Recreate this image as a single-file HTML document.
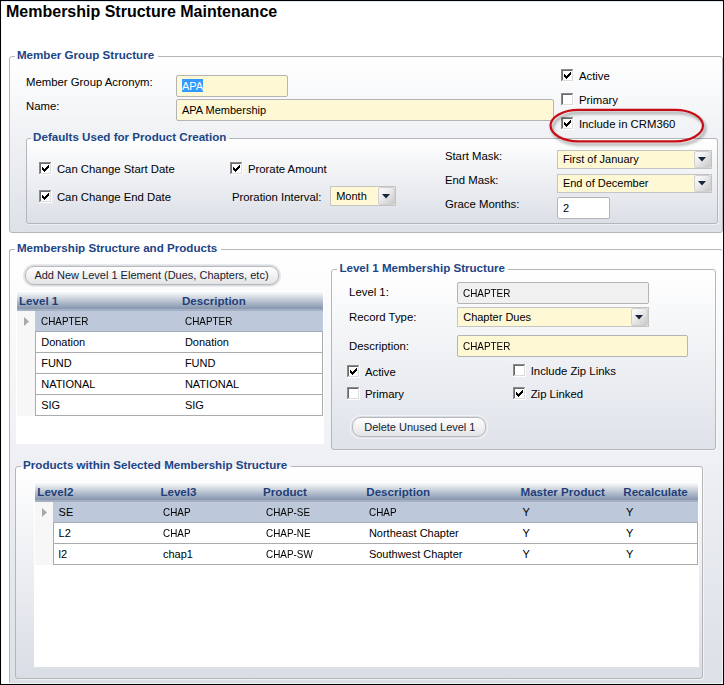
<!DOCTYPE html>
<html><head><meta charset="utf-8"><style>
html,body{margin:0;padding:0;}
body{width:724px;height:685px;position:relative;overflow:hidden;background:#fff;font-family:"Liberation Sans",sans-serif;}
.b{position:absolute;box-sizing:border-box;}
.t{position:absolute;white-space:nowrap;}
.cb{width:13px;height:13px;background:#fff;border-top:1px solid #7a7a7a;border-left:1px solid #7a7a7a;border-right:1px solid #dcdcdc;border-bottom:1px solid #dcdcdc;box-shadow:inset 1px 1px 0 #a8a8a8;}
</style></head><body>
<div class="t" style="left:6.00px;top:4.26px;font-size:16px;line-height:16px;font-weight:bold;color:#000;">Membership Structure Maintenance</div>
<div class="b" style="left:9px;top:56px;width:714px;height:177px;border:1px solid #b5b6b9;border-radius:3px;background:linear-gradient(#ffffff,#dde1e8);box-shadow:1px 1px 0 rgba(255,255,255,0.5);"></div>
<div class="b" style="left:14.5px;top:56px;width:143.0px;height:1px;background:#ffffff;"></div>
<div class="t" style="left:16.90px;top:49.18px;font-size:11.6px;line-height:11.6px;font-weight:bold;color:#1c4586;">Member Group Structure</div>
<div class="t" style="left:26.00px;top:77.29px;font-size:11.35px;line-height:11.35px;color:#000;">Member Group Acronym:</div>
<div class="t" style="left:26.00px;top:100.99px;font-size:11.35px;line-height:11.35px;color:#000;">Name:</div>
<div class="b" style="left:176px;top:75px;width:112px;height:22px;border:1px solid #b4b4b4;border-radius:2px;background:#fff8d4;"></div>
<div class="b" style="left:182px;top:79px;width:21px;height:13px;background:#3399ff;"></div>
<div class="t" style="left:181.90px;top:81.19px;font-size:11px;line-height:11px;color:#fff;">APA</div>
<div class="b" style="left:176px;top:99px;width:378px;height:22px;border:1px solid #b4b4b4;border-radius:2px;background:#fff8d4;"></div>
<div class="t" style="left:181.90px;top:105.49px;font-size:11px;line-height:11px;color:#000;">APA Membership</div>
<svg class="b" style="left:561px;top:69px" width="13" height="13" shape-rendering="crispEdges"><rect x="0" y="0" width="12" height="1" fill="#8a8a8a"/><rect x="0" y="0" width="1" height="12" fill="#8a8a8a"/><rect x="1" y="1" width="10" height="1" fill="#6a6a6a"/><rect x="1" y="1" width="1" height="10" fill="#6a6a6a"/><rect x="2" y="2" width="9" height="9" fill="#fff"/><rect x="11" y="1" width="1" height="11" fill="#dcdcdc"/><rect x="1" y="11" width="11" height="1" fill="#dcdcdc"/><rect x="12" y="0" width="1" height="13" fill="#fff"/><rect x="0" y="12" width="13" height="1" fill="#fff"/><rect x="9" y="3" width="1" height="1" fill="#000"/><rect x="8" y="4" width="1" height="1" fill="#000"/><rect x="9" y="4" width="1" height="1" fill="#000"/><rect x="3" y="5" width="1" height="1" fill="#000"/><rect x="7" y="5" width="1" height="1" fill="#000"/><rect x="8" y="5" width="1" height="1" fill="#000"/><rect x="9" y="5" width="1" height="1" fill="#000"/><rect x="3" y="6" width="1" height="1" fill="#000"/><rect x="4" y="6" width="1" height="1" fill="#000"/><rect x="6" y="6" width="1" height="1" fill="#000"/><rect x="7" y="6" width="1" height="1" fill="#000"/><rect x="8" y="6" width="1" height="1" fill="#000"/><rect x="3" y="7" width="1" height="1" fill="#000"/><rect x="4" y="7" width="1" height="1" fill="#000"/><rect x="5" y="7" width="1" height="1" fill="#000"/><rect x="6" y="7" width="1" height="1" fill="#000"/><rect x="7" y="7" width="1" height="1" fill="#000"/><rect x="4" y="8" width="1" height="1" fill="#000"/><rect x="5" y="8" width="1" height="1" fill="#000"/><rect x="6" y="8" width="1" height="1" fill="#000"/><rect x="5" y="9" width="1" height="1" fill="#000"/></svg>
<div class="t" style="left:578.90px;top:71.39px;font-size:11.35px;line-height:11.35px;color:#000;">Active</div>
<svg class="b" style="left:561px;top:93px" width="13" height="13" shape-rendering="crispEdges"><rect x="0" y="0" width="12" height="1" fill="#8a8a8a"/><rect x="0" y="0" width="1" height="12" fill="#8a8a8a"/><rect x="1" y="1" width="10" height="1" fill="#6a6a6a"/><rect x="1" y="1" width="1" height="10" fill="#6a6a6a"/><rect x="2" y="2" width="9" height="9" fill="#fff"/><rect x="11" y="1" width="1" height="11" fill="#dcdcdc"/><rect x="1" y="11" width="11" height="1" fill="#dcdcdc"/><rect x="12" y="0" width="1" height="13" fill="#fff"/><rect x="0" y="12" width="13" height="1" fill="#fff"/></svg>
<div class="t" style="left:578.90px;top:95.39px;font-size:11.35px;line-height:11.35px;color:#000;">Primary</div>
<svg class="b" style="left:561px;top:117px" width="13" height="13" shape-rendering="crispEdges"><rect x="0" y="0" width="12" height="1" fill="#8a8a8a"/><rect x="0" y="0" width="1" height="12" fill="#8a8a8a"/><rect x="1" y="1" width="10" height="1" fill="#6a6a6a"/><rect x="1" y="1" width="1" height="10" fill="#6a6a6a"/><rect x="2" y="2" width="9" height="9" fill="#fff"/><rect x="11" y="1" width="1" height="11" fill="#dcdcdc"/><rect x="1" y="11" width="11" height="1" fill="#dcdcdc"/><rect x="12" y="0" width="1" height="13" fill="#fff"/><rect x="0" y="12" width="13" height="1" fill="#fff"/><rect x="9" y="3" width="1" height="1" fill="#000"/><rect x="8" y="4" width="1" height="1" fill="#000"/><rect x="9" y="4" width="1" height="1" fill="#000"/><rect x="3" y="5" width="1" height="1" fill="#000"/><rect x="7" y="5" width="1" height="1" fill="#000"/><rect x="8" y="5" width="1" height="1" fill="#000"/><rect x="9" y="5" width="1" height="1" fill="#000"/><rect x="3" y="6" width="1" height="1" fill="#000"/><rect x="4" y="6" width="1" height="1" fill="#000"/><rect x="6" y="6" width="1" height="1" fill="#000"/><rect x="7" y="6" width="1" height="1" fill="#000"/><rect x="8" y="6" width="1" height="1" fill="#000"/><rect x="3" y="7" width="1" height="1" fill="#000"/><rect x="4" y="7" width="1" height="1" fill="#000"/><rect x="5" y="7" width="1" height="1" fill="#000"/><rect x="6" y="7" width="1" height="1" fill="#000"/><rect x="7" y="7" width="1" height="1" fill="#000"/><rect x="4" y="8" width="1" height="1" fill="#000"/><rect x="5" y="8" width="1" height="1" fill="#000"/><rect x="6" y="8" width="1" height="1" fill="#000"/><rect x="5" y="9" width="1" height="1" fill="#000"/></svg>
<div class="t" style="left:578.90px;top:118.89px;font-size:11.35px;line-height:11.35px;color:#000;">Include in CRM360</div>
<div class="b" style="left:26px;top:138px;width:692px;height:86px;border:1px solid #b5b6b9;border-radius:3px;background:linear-gradient(#ffffff,#dbdfe6);box-shadow:1px 1px 0 rgba(255,255,255,0.5);"></div>
<div class="b" style="left:30.700000000000003px;top:138px;width:198.0px;height:1px;background:#eff1f4;"></div>
<div class="t" style="left:33.10px;top:130.88px;font-size:11.6px;line-height:11.6px;font-weight:bold;color:#1c4586;">Defaults Used for Product Creation</div>
<svg class="b" style="left:39px;top:162px" width="13" height="13" shape-rendering="crispEdges"><rect x="0" y="0" width="12" height="1" fill="#8a8a8a"/><rect x="0" y="0" width="1" height="12" fill="#8a8a8a"/><rect x="1" y="1" width="10" height="1" fill="#6a6a6a"/><rect x="1" y="1" width="1" height="10" fill="#6a6a6a"/><rect x="2" y="2" width="9" height="9" fill="#fff"/><rect x="11" y="1" width="1" height="11" fill="#dcdcdc"/><rect x="1" y="11" width="11" height="1" fill="#dcdcdc"/><rect x="12" y="0" width="1" height="13" fill="#fff"/><rect x="0" y="12" width="13" height="1" fill="#fff"/><rect x="9" y="3" width="1" height="1" fill="#000"/><rect x="8" y="4" width="1" height="1" fill="#000"/><rect x="9" y="4" width="1" height="1" fill="#000"/><rect x="3" y="5" width="1" height="1" fill="#000"/><rect x="7" y="5" width="1" height="1" fill="#000"/><rect x="8" y="5" width="1" height="1" fill="#000"/><rect x="9" y="5" width="1" height="1" fill="#000"/><rect x="3" y="6" width="1" height="1" fill="#000"/><rect x="4" y="6" width="1" height="1" fill="#000"/><rect x="6" y="6" width="1" height="1" fill="#000"/><rect x="7" y="6" width="1" height="1" fill="#000"/><rect x="8" y="6" width="1" height="1" fill="#000"/><rect x="3" y="7" width="1" height="1" fill="#000"/><rect x="4" y="7" width="1" height="1" fill="#000"/><rect x="5" y="7" width="1" height="1" fill="#000"/><rect x="6" y="7" width="1" height="1" fill="#000"/><rect x="7" y="7" width="1" height="1" fill="#000"/><rect x="4" y="8" width="1" height="1" fill="#000"/><rect x="5" y="8" width="1" height="1" fill="#000"/><rect x="6" y="8" width="1" height="1" fill="#000"/><rect x="5" y="9" width="1" height="1" fill="#000"/></svg>
<div class="t" style="left:56.90px;top:163.89px;font-size:11.35px;line-height:11.35px;color:#000;">Can Change Start Date</div>
<svg class="b" style="left:39px;top:190px" width="13" height="13" shape-rendering="crispEdges"><rect x="0" y="0" width="12" height="1" fill="#8a8a8a"/><rect x="0" y="0" width="1" height="12" fill="#8a8a8a"/><rect x="1" y="1" width="10" height="1" fill="#6a6a6a"/><rect x="1" y="1" width="1" height="10" fill="#6a6a6a"/><rect x="2" y="2" width="9" height="9" fill="#fff"/><rect x="11" y="1" width="1" height="11" fill="#dcdcdc"/><rect x="1" y="11" width="11" height="1" fill="#dcdcdc"/><rect x="12" y="0" width="1" height="13" fill="#fff"/><rect x="0" y="12" width="13" height="1" fill="#fff"/><rect x="9" y="3" width="1" height="1" fill="#000"/><rect x="8" y="4" width="1" height="1" fill="#000"/><rect x="9" y="4" width="1" height="1" fill="#000"/><rect x="3" y="5" width="1" height="1" fill="#000"/><rect x="7" y="5" width="1" height="1" fill="#000"/><rect x="8" y="5" width="1" height="1" fill="#000"/><rect x="9" y="5" width="1" height="1" fill="#000"/><rect x="3" y="6" width="1" height="1" fill="#000"/><rect x="4" y="6" width="1" height="1" fill="#000"/><rect x="6" y="6" width="1" height="1" fill="#000"/><rect x="7" y="6" width="1" height="1" fill="#000"/><rect x="8" y="6" width="1" height="1" fill="#000"/><rect x="3" y="7" width="1" height="1" fill="#000"/><rect x="4" y="7" width="1" height="1" fill="#000"/><rect x="5" y="7" width="1" height="1" fill="#000"/><rect x="6" y="7" width="1" height="1" fill="#000"/><rect x="7" y="7" width="1" height="1" fill="#000"/><rect x="4" y="8" width="1" height="1" fill="#000"/><rect x="5" y="8" width="1" height="1" fill="#000"/><rect x="6" y="8" width="1" height="1" fill="#000"/><rect x="5" y="9" width="1" height="1" fill="#000"/></svg>
<div class="t" style="left:56.90px;top:192.39px;font-size:11.35px;line-height:11.35px;color:#000;">Can Change End Date</div>
<svg class="b" style="left:230px;top:162px" width="13" height="13" shape-rendering="crispEdges"><rect x="0" y="0" width="12" height="1" fill="#8a8a8a"/><rect x="0" y="0" width="1" height="12" fill="#8a8a8a"/><rect x="1" y="1" width="10" height="1" fill="#6a6a6a"/><rect x="1" y="1" width="1" height="10" fill="#6a6a6a"/><rect x="2" y="2" width="9" height="9" fill="#fff"/><rect x="11" y="1" width="1" height="11" fill="#dcdcdc"/><rect x="1" y="11" width="11" height="1" fill="#dcdcdc"/><rect x="12" y="0" width="1" height="13" fill="#fff"/><rect x="0" y="12" width="13" height="1" fill="#fff"/><rect x="9" y="3" width="1" height="1" fill="#000"/><rect x="8" y="4" width="1" height="1" fill="#000"/><rect x="9" y="4" width="1" height="1" fill="#000"/><rect x="3" y="5" width="1" height="1" fill="#000"/><rect x="7" y="5" width="1" height="1" fill="#000"/><rect x="8" y="5" width="1" height="1" fill="#000"/><rect x="9" y="5" width="1" height="1" fill="#000"/><rect x="3" y="6" width="1" height="1" fill="#000"/><rect x="4" y="6" width="1" height="1" fill="#000"/><rect x="6" y="6" width="1" height="1" fill="#000"/><rect x="7" y="6" width="1" height="1" fill="#000"/><rect x="8" y="6" width="1" height="1" fill="#000"/><rect x="3" y="7" width="1" height="1" fill="#000"/><rect x="4" y="7" width="1" height="1" fill="#000"/><rect x="5" y="7" width="1" height="1" fill="#000"/><rect x="6" y="7" width="1" height="1" fill="#000"/><rect x="7" y="7" width="1" height="1" fill="#000"/><rect x="4" y="8" width="1" height="1" fill="#000"/><rect x="5" y="8" width="1" height="1" fill="#000"/><rect x="6" y="8" width="1" height="1" fill="#000"/><rect x="5" y="9" width="1" height="1" fill="#000"/></svg>
<div class="t" style="left:247.90px;top:163.59px;font-size:11.35px;line-height:11.35px;color:#000;">Prorate Amount</div>
<div class="t" style="left:231.90px;top:191.59px;font-size:11.35px;line-height:11.35px;color:#000;">Proration Interval:</div>
<div class="b" style="left:330px;top:186px;width:66px;height:20px;border:1px solid #c4c4c4;background:#fff8d4;"></div>
<div class="b" style="left:378px;top:187px;width:17px;height:18px;border-radius:3px;background:linear-gradient(135deg,#ffffff 0%,#ededed 40%,#d6d6d6 75%,#c2c2c2 100%);box-shadow:inset 0 0 0 1px #cfcfcf;"></div>
<svg class="b" style="left:382.3px;top:193.7px" width="8" height="5"><path d="M0 0 H8 L4 4.6 Z" fill="#18243c"/></svg>
<div class="t" style="left:336.20px;top:190.89px;font-size:11px;line-height:11px;color:#000;">Month</div>
<div class="t" style="left:444.90px;top:150.79px;font-size:11.35px;line-height:11.35px;color:#000;">Start Mask:</div>
<div class="t" style="left:444.90px;top:174.59px;font-size:11.35px;line-height:11.35px;color:#000;">End Mask:</div>
<div class="t" style="left:444.90px;top:198.69px;font-size:11.35px;line-height:11.35px;color:#000;">Grace Months:</div>
<div class="b" style="left:557px;top:150px;width:155px;height:19px;border:1px solid #c4c4c4;background:#fff8d4;"></div>
<div class="b" style="left:694px;top:151px;width:17px;height:17px;border-radius:3px;background:linear-gradient(135deg,#ffffff 0%,#ededed 40%,#d6d6d6 75%,#c2c2c2 100%);box-shadow:inset 0 0 0 1px #cfcfcf;"></div>
<svg class="b" style="left:698.3px;top:157.2px" width="8" height="5"><path d="M0 0 H8 L4 4.6 Z" fill="#18243c"/></svg>
<div class="t" style="left:562.90px;top:154.39px;font-size:11px;line-height:11px;color:#000;">First of January</div>
<div class="b" style="left:557px;top:174px;width:155px;height:19px;border:1px solid #c4c4c4;background:#fff8d4;"></div>
<div class="b" style="left:694px;top:175px;width:17px;height:17px;border-radius:3px;background:linear-gradient(135deg,#ffffff 0%,#ededed 40%,#d6d6d6 75%,#c2c2c2 100%);box-shadow:inset 0 0 0 1px #cfcfcf;"></div>
<svg class="b" style="left:698.3px;top:181.2px" width="8" height="5"><path d="M0 0 H8 L4 4.6 Z" fill="#18243c"/></svg>
<div class="t" style="left:562.90px;top:178.09px;font-size:11px;line-height:11px;color:#000;">End of December</div>
<div class="b" style="left:557px;top:197px;width:53px;height:22px;border:1px solid #b4b4b4;border-radius:2px;background:#ffffff;"></div>
<div class="t" style="left:562.90px;top:203.49px;font-size:11px;line-height:11px;color:#000;">2</div>
<svg class="b" style="left:540px;top:100px" width="184" height="60"><defs><filter id="sh" x="-20%" y="-40%" width="140%" height="180%"><feDropShadow dx="2" dy="3" stdDeviation="1.6" flood-color="#000" flood-opacity="0.38"/></filter></defs><rect x="10.5" y="9.8" width="152.5" height="31.6" rx="28" ry="15.8" fill="none" stroke="#c60f18" stroke-width="2.2" filter="url(#sh)"/></svg>
<div class="b" style="left:9px;top:249px;width:714px;height:435px;border:1px solid #b5b6b9;border-radius:3px;background:linear-gradient(#ffffff,#dce0e7);border-right-color:#eef1f6;border-bottom-color:#eef1f6;"></div>
<div class="b" style="left:14.5px;top:249px;width:206.0px;height:1px;background:#ffffff;"></div>
<div class="t" style="left:16.90px;top:241.88px;font-size:11.6px;line-height:11.6px;font-weight:bold;color:#1c4586;">Membership Structure and Products</div>
<div class="b" style="left:23px;top:264px;width:258px;height:23px;border-radius:11px;background:#e9eaed;"></div>
<div class="b" style="left:25px;top:266px;width:254px;height:19px;border:1px solid #b6b9be;border-radius:9px;background:linear-gradient(#ffffff 0%,#f3f3f4 45%,#e3e4e6 100%);box-shadow:0 0 0 1px #dcdde0;"></div>
<div class="t" style="left:34.40px;top:270.49px;font-size:11.0px;line-height:11.0px;color:#161d33;">Add New Level 1 Element (Dues, Chapters, etc)</div>
<div class="b" style="left:16px;top:291px;width:308px;height:153px;background:#ffffff;"></div>
<div class="b" style="left:17px;top:292px;width:306px;height:19px;background:linear-gradient(#f8f9fa 0px,#eceff2 2px,#d0d6df 6px,#b2bdcc 10px,#98a6bb 14px,#8a99b2 16px,#8d9cb4 17px,#a2aec1 17px,#a6b2c4 19px);"></div>
<div class="t" style="left:19.00px;top:295.18px;font-size:11.6px;line-height:11.6px;font-weight:bold;color:#1f3f7a;">Level 1</div>
<div class="t" style="left:182.00px;top:295.18px;font-size:11.6px;line-height:11.6px;font-weight:bold;color:#1f3f7a;">Description</div>
<div class="b" style="left:17px;top:311px;width:18px;height:21px;background:#f7f7f8;"></div>
<div class="b" style="left:35px;top:311px;width:288px;height:21px;background:#bdc8da;border-bottom:1px solid #a6adb8;"></div>
<svg class="b" style="left:24px;top:317px" width="5" height="9"><path d="M0 0 L5 4.5 L0 9 Z" fill="#a9a9a9"/></svg>
<div class="t" style="left:41.20px;top:315.69px;font-size:11px;line-height:11px;color:#000;transform:scaleX(0.9);transform-origin:0 0;">CHAPTER</div>
<div class="t" style="left:184.90px;top:315.69px;font-size:11px;line-height:11px;color:#000;transform:scaleX(0.9);transform-origin:0 0;">CHAPTER</div>
<div class="b" style="left:17px;top:332px;width:18px;height:21px;background:#f7f7f8;"></div>
<div class="b" style="left:35px;top:332px;width:288px;height:21px;background:#fff;border:1px solid #ababab;border-top:none;"></div>
<div class="t" style="left:41.20px;top:336.69px;font-size:11px;line-height:11px;color:#000;">Donation</div>
<div class="t" style="left:184.90px;top:336.69px;font-size:11px;line-height:11px;color:#000;">Donation</div>
<div class="b" style="left:17px;top:353px;width:18px;height:21px;background:#f7f7f8;"></div>
<div class="b" style="left:35px;top:353px;width:288px;height:21px;background:#fff;border:1px solid #ababab;border-top:none;"></div>
<div class="t" style="left:41.20px;top:357.69px;font-size:11px;line-height:11px;color:#000;">FUND</div>
<div class="t" style="left:184.90px;top:357.69px;font-size:11px;line-height:11px;color:#000;">FUND</div>
<div class="b" style="left:17px;top:374px;width:18px;height:21px;background:#f7f7f8;"></div>
<div class="b" style="left:35px;top:374px;width:288px;height:21px;background:#fff;border:1px solid #ababab;border-top:none;"></div>
<div class="t" style="left:41.20px;top:378.69px;font-size:11px;line-height:11px;color:#000;">NATIONAL</div>
<div class="t" style="left:184.90px;top:378.69px;font-size:11px;line-height:11px;color:#000;">NATIONAL</div>
<div class="b" style="left:17px;top:395px;width:18px;height:21px;background:#f7f7f8;"></div>
<div class="b" style="left:35px;top:395px;width:288px;height:21px;background:#fff;border:1px solid #ababab;border-top:none;"></div>
<div class="t" style="left:41.20px;top:399.69px;font-size:11px;line-height:11px;color:#000;">SIG</div>
<div class="t" style="left:184.90px;top:399.69px;font-size:11px;line-height:11px;color:#000;">SIG</div>
<div class="b" style="left:331px;top:269px;width:385px;height:181px;border:1px solid #b5b6b9;border-radius:3px;background:linear-gradient(#ffffff,#dee2e9);box-shadow:1px 1px 0 rgba(255,255,255,0.5);"></div>
<div class="b" style="left:337px;top:269px;width:171px;height:1px;background:#fdfdfe;"></div>
<div class="t" style="left:339.40px;top:261.58px;font-size:11.6px;line-height:11.6px;font-weight:bold;color:#1c4586;">Level 1 Membership Structure</div>
<div class="t" style="left:349.10px;top:287.39px;font-size:11.35px;line-height:11.35px;color:#000;">Level 1:</div>
<div class="t" style="left:349.10px;top:312.39px;font-size:11.35px;line-height:11.35px;color:#000;">Record Type:</div>
<div class="t" style="left:349.10px;top:340.69px;font-size:11.35px;line-height:11.35px;color:#000;">Description:</div>
<div class="b" style="left:457px;top:282px;width:192px;height:22px;border:1px solid #b4b4b4;border-radius:2px;background:#f0f0f0;"></div>
<div class="t" style="left:463.20px;top:288.19px;font-size:11px;line-height:11px;color:#000;transform:scaleX(0.9);transform-origin:0 0;">CHAPTER</div>
<div class="b" style="left:457px;top:307px;width:192px;height:20px;border:1px solid #c4c4c4;background:#fff8d4;"></div>
<div class="b" style="left:631px;top:308px;width:17px;height:18px;border-radius:3px;background:linear-gradient(135deg,#ffffff 0%,#ededed 40%,#d6d6d6 75%,#c2c2c2 100%);box-shadow:inset 0 0 0 1px #cfcfcf;"></div>
<svg class="b" style="left:635.3px;top:314.7px" width="8" height="5"><path d="M0 0 H8 L4 4.6 Z" fill="#18243c"/></svg>
<div class="t" style="left:463.20px;top:311.69px;font-size:11px;line-height:11px;color:#000;">Chapter Dues</div>
<div class="b" style="left:457px;top:335px;width:231px;height:22px;border:1px solid #b4b4b4;border-radius:2px;background:#fff8d4;"></div>
<div class="t" style="left:463.20px;top:340.59px;font-size:11px;line-height:11px;color:#000;transform:scaleX(0.9);transform-origin:0 0;">CHAPTER</div>
<svg class="b" style="left:347px;top:365px" width="13" height="13" shape-rendering="crispEdges"><rect x="0" y="0" width="12" height="1" fill="#8a8a8a"/><rect x="0" y="0" width="1" height="12" fill="#8a8a8a"/><rect x="1" y="1" width="10" height="1" fill="#6a6a6a"/><rect x="1" y="1" width="1" height="10" fill="#6a6a6a"/><rect x="2" y="2" width="9" height="9" fill="#fff"/><rect x="11" y="1" width="1" height="11" fill="#dcdcdc"/><rect x="1" y="11" width="11" height="1" fill="#dcdcdc"/><rect x="12" y="0" width="1" height="13" fill="#fff"/><rect x="0" y="12" width="13" height="1" fill="#fff"/><rect x="9" y="3" width="1" height="1" fill="#000"/><rect x="8" y="4" width="1" height="1" fill="#000"/><rect x="9" y="4" width="1" height="1" fill="#000"/><rect x="3" y="5" width="1" height="1" fill="#000"/><rect x="7" y="5" width="1" height="1" fill="#000"/><rect x="8" y="5" width="1" height="1" fill="#000"/><rect x="9" y="5" width="1" height="1" fill="#000"/><rect x="3" y="6" width="1" height="1" fill="#000"/><rect x="4" y="6" width="1" height="1" fill="#000"/><rect x="6" y="6" width="1" height="1" fill="#000"/><rect x="7" y="6" width="1" height="1" fill="#000"/><rect x="8" y="6" width="1" height="1" fill="#000"/><rect x="3" y="7" width="1" height="1" fill="#000"/><rect x="4" y="7" width="1" height="1" fill="#000"/><rect x="5" y="7" width="1" height="1" fill="#000"/><rect x="6" y="7" width="1" height="1" fill="#000"/><rect x="7" y="7" width="1" height="1" fill="#000"/><rect x="4" y="8" width="1" height="1" fill="#000"/><rect x="5" y="8" width="1" height="1" fill="#000"/><rect x="6" y="8" width="1" height="1" fill="#000"/><rect x="5" y="9" width="1" height="1" fill="#000"/></svg>
<div class="t" style="left:364.90px;top:367.49px;font-size:11.35px;line-height:11.35px;color:#000;">Active</div>
<svg class="b" style="left:347px;top:387px" width="13" height="13" shape-rendering="crispEdges"><rect x="0" y="0" width="12" height="1" fill="#8a8a8a"/><rect x="0" y="0" width="1" height="12" fill="#8a8a8a"/><rect x="1" y="1" width="10" height="1" fill="#6a6a6a"/><rect x="1" y="1" width="1" height="10" fill="#6a6a6a"/><rect x="2" y="2" width="9" height="9" fill="#fff"/><rect x="11" y="1" width="1" height="11" fill="#dcdcdc"/><rect x="1" y="11" width="11" height="1" fill="#dcdcdc"/><rect x="12" y="0" width="1" height="13" fill="#fff"/><rect x="0" y="12" width="13" height="1" fill="#fff"/></svg>
<div class="t" style="left:364.90px;top:389.19px;font-size:11.35px;line-height:11.35px;color:#000;">Primary</div>
<svg class="b" style="left:513px;top:364px" width="13" height="13" shape-rendering="crispEdges"><rect x="0" y="0" width="12" height="1" fill="#8a8a8a"/><rect x="0" y="0" width="1" height="12" fill="#8a8a8a"/><rect x="1" y="1" width="10" height="1" fill="#6a6a6a"/><rect x="1" y="1" width="1" height="10" fill="#6a6a6a"/><rect x="2" y="2" width="9" height="9" fill="#fff"/><rect x="11" y="1" width="1" height="11" fill="#dcdcdc"/><rect x="1" y="11" width="11" height="1" fill="#dcdcdc"/><rect x="12" y="0" width="1" height="13" fill="#fff"/><rect x="0" y="12" width="13" height="1" fill="#fff"/></svg>
<div class="t" style="left:530.70px;top:366.49px;font-size:11.35px;line-height:11.35px;color:#000;">Include Zip Links</div>
<svg class="b" style="left:513px;top:387px" width="13" height="13" shape-rendering="crispEdges"><rect x="0" y="0" width="12" height="1" fill="#8a8a8a"/><rect x="0" y="0" width="1" height="12" fill="#8a8a8a"/><rect x="1" y="1" width="10" height="1" fill="#6a6a6a"/><rect x="1" y="1" width="1" height="10" fill="#6a6a6a"/><rect x="2" y="2" width="9" height="9" fill="#fff"/><rect x="11" y="1" width="1" height="11" fill="#dcdcdc"/><rect x="1" y="11" width="11" height="1" fill="#dcdcdc"/><rect x="12" y="0" width="1" height="13" fill="#fff"/><rect x="0" y="12" width="13" height="1" fill="#fff"/><rect x="9" y="3" width="1" height="1" fill="#000"/><rect x="8" y="4" width="1" height="1" fill="#000"/><rect x="9" y="4" width="1" height="1" fill="#000"/><rect x="3" y="5" width="1" height="1" fill="#000"/><rect x="7" y="5" width="1" height="1" fill="#000"/><rect x="8" y="5" width="1" height="1" fill="#000"/><rect x="9" y="5" width="1" height="1" fill="#000"/><rect x="3" y="6" width="1" height="1" fill="#000"/><rect x="4" y="6" width="1" height="1" fill="#000"/><rect x="6" y="6" width="1" height="1" fill="#000"/><rect x="7" y="6" width="1" height="1" fill="#000"/><rect x="8" y="6" width="1" height="1" fill="#000"/><rect x="3" y="7" width="1" height="1" fill="#000"/><rect x="4" y="7" width="1" height="1" fill="#000"/><rect x="5" y="7" width="1" height="1" fill="#000"/><rect x="6" y="7" width="1" height="1" fill="#000"/><rect x="7" y="7" width="1" height="1" fill="#000"/><rect x="4" y="8" width="1" height="1" fill="#000"/><rect x="5" y="8" width="1" height="1" fill="#000"/><rect x="6" y="8" width="1" height="1" fill="#000"/><rect x="5" y="9" width="1" height="1" fill="#000"/></svg>
<div class="t" style="left:530.70px;top:388.69px;font-size:11.35px;line-height:11.35px;color:#000;">Zip Linked</div>
<div class="b" style="left:350px;top:415px;width:138px;height:24px;border-radius:11px;background:#f1f2f5;"></div>
<div class="b" style="left:352px;top:417px;width:134px;height:20px;border:1px solid #b6b9be;border-radius:9px;background:linear-gradient(#ffffff 0%,#f3f3f4 45%,#e3e4e6 100%);box-shadow:0 0 0 1px #dcdde0;"></div>
<div class="t" style="left:364.20px;top:422.49px;font-size:11.0px;line-height:11.0px;color:#161d33;">Delete Unused Level 1</div>
<div class="b" style="left:15px;top:466px;width:688px;height:213px;border:1px solid #b5b6b9;border-radius:3px;background:linear-gradient(#ffffff,#d9dde5);box-shadow:1px 1px 0 rgba(255,255,255,0.5);"></div>
<div class="b" style="left:20.7px;top:466px;width:270.0px;height:1px;background:#eef0f3;"></div>
<div class="t" style="left:23.10px;top:458.78px;font-size:11.6px;line-height:11.6px;font-weight:bold;color:#1c4586;">Products within Selected Membership Structure</div>
<div class="b" style="left:34px;top:482px;width:665px;height:185px;background:#ffffff;"></div>
<div class="b" style="left:35px;top:483px;width:663px;height:19px;background:linear-gradient(#f8f9fa 0px,#eceff2 2px,#d0d6df 6px,#b2bdcc 10px,#98a6bb 14px,#8a99b2 16px,#8d9cb4 17px,#a2aec1 17px,#a6b2c4 19px);"></div>
<div class="t" style="left:37.30px;top:486.18px;font-size:11.6px;line-height:11.6px;font-weight:bold;color:#1f3f7a;">Level2</div>
<div class="t" style="left:160.40px;top:486.18px;font-size:11.6px;line-height:11.6px;font-weight:bold;color:#1f3f7a;">Level3</div>
<div class="t" style="left:263.10px;top:486.18px;font-size:11.6px;line-height:11.6px;font-weight:bold;color:#1f3f7a;">Product</div>
<div class="t" style="left:366.30px;top:486.18px;font-size:11.6px;line-height:11.6px;font-weight:bold;color:#1f3f7a;">Description</div>
<div class="t" style="left:520.50px;top:486.18px;font-size:11.6px;line-height:11.6px;font-weight:bold;color:#1f3f7a;">Master Product</div>
<div class="t" style="left:623.30px;top:486.18px;font-size:11.6px;line-height:11.6px;font-weight:bold;color:#1f3f7a;">Recalculate</div>
<div class="b" style="left:35px;top:502px;width:18px;height:21px;background:#f7f7f8;"></div>
<div class="b" style="left:53px;top:502px;width:645px;height:21px;background:#bdc8da;border-bottom:1px solid #a6adb8;"></div>
<svg class="b" style="left:42px;top:508px" width="5" height="9"><path d="M0 0 L5 4.5 L0 9 Z" fill="#a9a9a9"/></svg>
<div class="t" style="left:58.60px;top:506.69px;font-size:11px;line-height:11px;color:#000;">SE</div>
<div class="t" style="left:162.90px;top:506.69px;font-size:11px;line-height:11px;color:#000;transform:scaleX(0.9);transform-origin:0 0;">CHAP</div>
<div class="t" style="left:265.90px;top:506.69px;font-size:11px;line-height:11px;color:#000;transform:scaleX(0.9);transform-origin:0 0;">CHAP-SE</div>
<div class="t" style="left:368.90px;top:506.69px;font-size:11px;line-height:11px;color:#000;transform:scaleX(0.9);transform-origin:0 0;">CHAP</div>
<div class="t" style="left:522.40px;top:506.69px;font-size:11px;line-height:11px;color:#000;">Y</div>
<div class="t" style="left:625.90px;top:506.69px;font-size:11px;line-height:11px;color:#000;">Y</div>
<div class="b" style="left:35px;top:523px;width:18px;height:21px;background:#f7f7f8;"></div>
<div class="b" style="left:53px;top:523px;width:645px;height:21px;background:#fff;border:1px solid #ababab;border-top:none;"></div>
<div class="t" style="left:58.60px;top:527.69px;font-size:11px;line-height:11px;color:#000;">L2</div>
<div class="t" style="left:162.90px;top:527.69px;font-size:11px;line-height:11px;color:#000;transform:scaleX(0.9);transform-origin:0 0;">CHAP</div>
<div class="t" style="left:265.90px;top:527.69px;font-size:11px;line-height:11px;color:#000;transform:scaleX(0.9);transform-origin:0 0;">CHAP-NE</div>
<div class="t" style="left:368.90px;top:527.69px;font-size:11px;line-height:11px;color:#000;">Northeast Chapter</div>
<div class="t" style="left:522.40px;top:527.69px;font-size:11px;line-height:11px;color:#000;">Y</div>
<div class="t" style="left:625.90px;top:527.69px;font-size:11px;line-height:11px;color:#000;">Y</div>
<div class="b" style="left:35px;top:544px;width:18px;height:21px;background:#f7f7f8;"></div>
<div class="b" style="left:53px;top:544px;width:645px;height:21px;background:#fff;border:1px solid #ababab;border-top:none;"></div>
<div class="t" style="left:58.60px;top:548.69px;font-size:11px;line-height:11px;color:#000;">l2</div>
<div class="t" style="left:162.90px;top:548.69px;font-size:11px;line-height:11px;color:#000;">chap1</div>
<div class="t" style="left:265.90px;top:548.69px;font-size:11px;line-height:11px;color:#000;transform:scaleX(0.9);transform-origin:0 0;">CHAP-SW</div>
<div class="t" style="left:368.90px;top:548.69px;font-size:11px;line-height:11px;color:#000;">Southwest Chapter</div>
<div class="t" style="left:522.40px;top:548.69px;font-size:11px;line-height:11px;color:#000;">Y</div>
<div class="t" style="left:625.90px;top:548.69px;font-size:11px;line-height:11px;color:#000;">Y</div>
<div class="b" style="left:0;top:0;width:724px;height:685px;border:1px solid #000;box-sizing:border-box;"></div>
<div class="b" style="left:1px;top:1px;width:722px;height:1px;background:#dbe8fa;"></div>
<div class="b" style="left:1px;top:2px;width:1px;height:682px;background:#f3f6fb;"></div>
</body></html>
